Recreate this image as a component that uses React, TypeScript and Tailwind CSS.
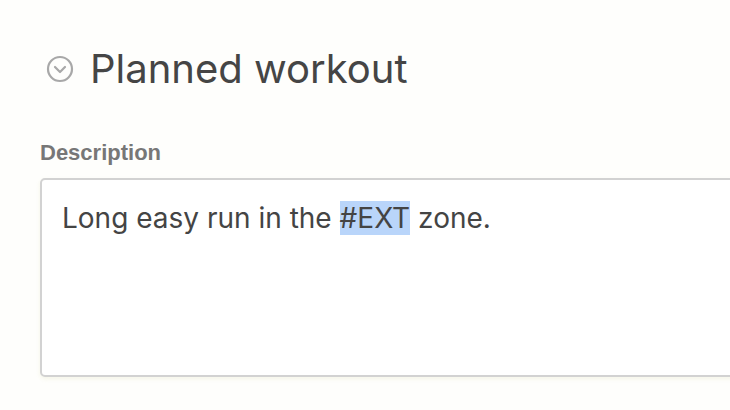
export default function App() {
  return (
    <div className="w-[730px] h-[410px] overflow-hidden bg-[#fefefc] font-['Inter',sans-serif]">
      <div className="pl-[40px] pt-[45px]">
        {/* Section header */}
        <div className="flex items-center gap-[16px] pl-[6px]">
          <svg width="28" height="28" viewBox="0 0 28 28" fill="none" stroke="#a8a8a8" strokeWidth="2.2" strokeLinecap="round" strokeLinejoin="round">
            <circle cx="14" cy="14" r="12" />
            <path d="M9 12l5 5 5-5" />
          </svg>
          <h2 className="text-[40px] leading-[48px] text-[#454545] font-normal">Planned workout</h2>
        </div>

        {/* Description field */}
        <div className="mt-[47px] text-[22px] leading-[26px] font-bold text-[#777] font-['Liberation_Sans',Arial,sans-serif]">Description</div>
        <div className="mt-[12px] h-[199px] w-[720px] rounded-[5px] border-2 border-[#d2d2d2] bg-white px-[20px] pt-[20px] shadow-[0_2px_4px_rgba(240,240,220,0.6)]">
          <p className="text-[28px] leading-[36px] text-[#444]">
            Long easy run in the <span className="bg-[#b9d5fa]">#EXT</span> zone.
          </p>
        </div>
      </div>
    </div>
  );
}
